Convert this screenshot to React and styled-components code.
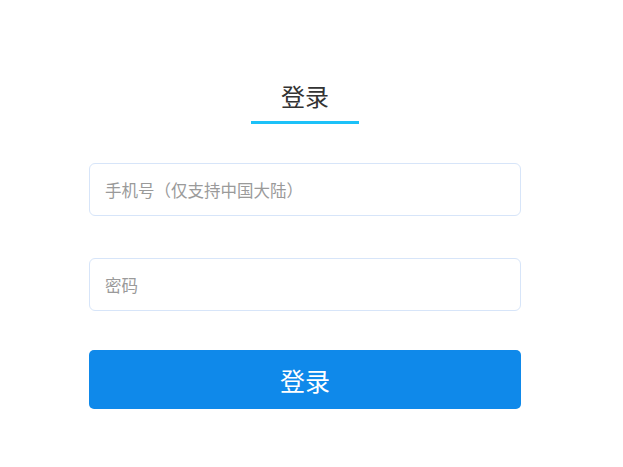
import React from 'react';
import styled, { createGlobalStyle } from 'styled-components';

const GlobalStyle = createGlobalStyle`
  html, body {
    margin: 0;
    padding: 0;
    background: #fff;
  }

  body {
    font-family: 'Microsoft YaHei', 'Noto Sans CJK SC', 'Liberation Sans', sans-serif;
  }
`;

const StyledPage = styled.div`
  width: 623px;
  height: 467px;
  box-sizing: border-box;
  padding: 79px 0 0 89px;
`;

const StyledForm = styled.form`
  display: flex;
  flex-direction: column;
  width: 432px;
`;

const StyledTabs = styled.div`
  display: flex;
  justify-content: center;
  margin-bottom: 39px;
`;

const StyledTab = styled.div`
  display: flex;
  flex-direction: column;
  align-items: center;
  width: 108px;
  font-size: 24px;
  line-height: 34px;
  color: #333;

  &:after {
    content: '';
    display: block;
    width: 100%;
    height: 3px;
    margin-top: 8px;
    background-color: #1cc1f8;
  }
`;

const StyledInput = styled.input`
  box-sizing: border-box;
  width: 100%;
  height: 53px;
  margin-bottom: ${({ $gap }) => $gap}px;
  padding: 0 15px;
  border: 1px solid #d7e5f9;
  border-radius: 6px;
  outline: none;
  font-family: inherit;
  font-size: 16.5px;
  color: #333;

  &::placeholder {
    color: #9a9a9a;
  }
`;

const StyledButton = styled.button`
  box-sizing: border-box;
  width: 100%;
  height: 59px;
  border: 0;
  border-radius: 5px;
  background-color: #0f89ea;
  color: #fff;
  font-family: inherit;
  font-size: 25px;
  cursor: pointer;
`;

const App = () => (
  <>
    <GlobalStyle />
    <StyledPage>
      <StyledForm onSubmit={e => e.preventDefault()}>
        <StyledTabs>
          <StyledTab>登录</StyledTab>
        </StyledTabs>
        <StyledInput type="tel" placeholder="手机号（仅支持中国大陆）" $gap={42} />
        <StyledInput type="password" placeholder="密码" $gap={39} />
        <StyledButton type="submit">登录</StyledButton>
      </StyledForm>
    </StyledPage>
  </>
);

export default App;
